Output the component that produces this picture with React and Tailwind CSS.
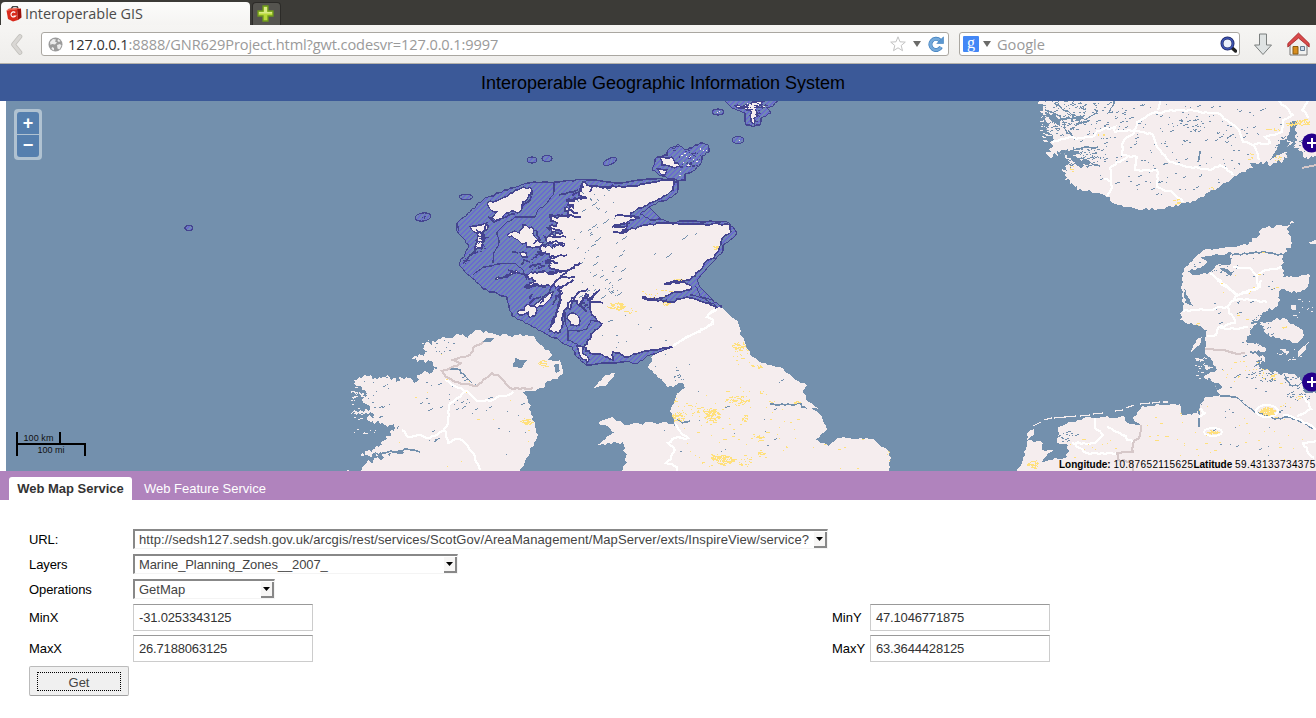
import React from "react";

/* ---------- small deterministic helpers for the map drawing ---------- */
function rng(seed) {
  let s = seed >>> 0;
  return () => {
    s = (s * 1664525 + 1013904223) >>> 0;
    return s / 4294967296;
  };
}

function parse(str) {
  return str.trim().split(/\s+/).map((p) => p.split(",").map(Number));
}

// Subdivides a polyline and moves the new points a little, for a ragged coast.
// amp is a number, or a function of the position.
function jag(str, amp, seed = 7, closed = true) {
  const pts = parse(str);
  const r = rng(seed);
  const out = [];
  const n = closed ? pts.length : pts.length - 1;
  for (let i = 0; i < n; i++) {
    const [x1, y1] = pts[i];
    const [x2, y2] = pts[(i + 1) % pts.length];
    const len = Math.hypot(x2 - x1, y2 - y1);
    const a = typeof amp === "function" ? amp((x1 + x2) / 2, (y1 + y2) / 2) : amp;
    const k = Math.max(1, Math.round(len / (a > 1.7 ? 2 : 3)));
    out.push([x1, y1]);
    for (let j = 1; j < k; j++) {
      const o = (r() - 0.5) * 2 * a;
      out.push([
        x1 + ((x2 - x1) * j) / k - ((y2 - y1) / len) * o,
        y1 + ((y2 - y1) * j) / k + ((x2 - x1) / len) * o,
      ]);
    }
  }
  if (!closed) out.push(pts[pts.length - 1]);
  return "M" + out.map(([x, y]) => Math.round(x) + " " + Math.round(y)).join("L") + (closed ? "Z" : "");
}

// Horizontal specks [cx, cy, rx, ry, count] spread over an ellipse.
function specks(list, maxW, seed, slope = 0) {
  const r = rng(seed);
  let d = "";
  for (const [cx, cy, rx, ry, n] of list) {
    for (let i = 0; i < n; i++) {
      const a = r() * Math.PI * 2;
      const q = Math.sqrt(r());
      const x = Math.round(cx + Math.cos(a) * rx * q);
      const y = Math.round(cy + Math.sin(a) * ry * q);
      const w = 1 + Math.floor(r() * r() * maxW);
      for (let j = 0; j < w; j++) d += `M${x + j} ${y - Math.round(j * slope)}h1v1h-1z`;
    }
  }
  return d;
}

const ZONE =
  "527,183 560,182 583,179 600,181 620,183 643,180 660,178 678,182 678,190 672,197 653,205 649,207 661,219 672,223 682,221 727,222 733,227 737,233 733,238 723,245 723,251 713,262 707,268 697,280 700,287 712,299 722,307 718,310 700,320 673,347 650,355 635,364 627,361 617,363 586,365 577,357 572,347 512,316 507,297 483,289 459,265 469,245 457,231 457,223 485,198";
const SCOT =
  "583,182 587,185 600,187 622,187 650,183 665,180 674,181 673,190 667,195 650,203 631,213 630,216 638,217 628,222 614,227 627,226 622,232 638,227 660,223 682,224 700,224 728,224 731,232 724,237 719,247 717,253 703,267 690,280 681,281 665,284 685,282 692,287 690,290 672,293 663,298 642,298 655,300 672,302 680,299 687,297 703,302 719,308 707,317 712,325 697,333 673,347 648,351 636,354 628,357 613,352 613,360 600,354 590,353 584,347 593,333 602,324 592,315 590,302 586,294 580,306 574,299 570,309 566,308 563,316 560,332 550,331 557,310 560,293 558,286 545,286 525,287 535,281 525,275 531,272 547,273 562,272 549,266 546,261 556,257 539,254 540,247 565,245 548,243 545,237 562,233 547,228 557,223 549,217 570,215 565,208 573,207 566,201 587,198 579,192";
const ENGLAND =
  "722,308 738,322 742,337 752,357 762,363 782,368 795,380 807,385 803,390 808,402 818,409 808,407 820,415 827,429 815,440 828,446 837,438 872,439 890,452 890,467 885,474 620,474 627,463 623,442 596,445 615,432 598,423 612,417 625,425 663,422 675,425 670,412 675,400 677,393 685,388 682,383 667,387 657,375 648,368 655,353 673,346 697,332 713,324 708,317 717,309";
const IRELAND =
  "475,330 497,335 532,336 552,355 547,360 560,360 563,370 558,379 547,381 543,388 532,391 523,392 528,400 533,417 537,438 530,453 522,467 520,474 363,474 367,462 393,454 361,456 382,445 392,430 403,427 380,424 367,420 374,415 350,413 370,409 362,400 368,396 350,392 367,394 353,380 367,376 393,378 397,383 402,378 422,381 417,375 440,369 433,363 412,359 427,352 422,347 440,339 463,334 468,338";
const NORWAY =
  "1037,98 1043,110 1048,127 1053,137 1047,155 1053,156 1063,150 1070,163 1063,172 1065,180 1080,189 1110,197 1112,203 1133,208 1158,209 1190,203 1217,188 1250,168 1253,163 1273,163 1288,158 1287,150 1293,140 1298,150 1307,157 1320,160 1320,98";
const JUTLAND =
  "1295,221 1287,228 1292,243 1283,255 1282,267 1283,277 1310,276 1308,286 1300,292 1280,290 1278,305 1268,310 1262,314 1257,322 1250,333 1247,343 1268,350 1249,352 1267,358 1257,368 1300,377 1305,393 1320,393 1320,474 1013,474 1022,463 1028,440 1043,443 1042,450 1053,450 1040,462 1067,457 1068,445 1057,443 1058,427 1083,418 1125,417 1127,423 1140,425 1132,418 1142,406 1180,404 1182,415 1192,415 1198,410 1205,397 1220,395 1213,383 1203,377 1217,370 1205,352 1207,330 1180,320 1183,307 1182,273 1190,262 1203,250 1223,248 1247,245 1265,228 1285,226";

const ISLES = [
  "487,203 505,197 518,190 530,187 532,194 522,205 520,212 506,213 500,220 490,218 497,212 489,208",
  "470,227 485,223 488,228 482,233 482,248 475,249 477,233",
  "523,225 532,227 535,237 543,243 538,247 530,247 518,240 514,238 507,235 515,231 519,233",
  "495,279 506,275 516,270 518,272 505,277 497,280",
  "517,312 524,310 528,304 537,310 535,316 530,318 528,312 519,315",
  "553,292 548,301 537,308 534,306 544,298",
  "568,315 574,313 580,321 579,325 571,325 567,319",
  "577,346 583,347 582,352 589,360 587,363 579,353",
  "520,253 526,253 527,257 522,257",
  "529,297 533,294 530,299",
  "660,158 672,157 675,163 683,167 672,167 662,165",
  "657,169 667,170 665,175 660,173",
  "735,106 748,106 752,102 765,101 755,108 757,113 754,124 751,122 752,112",
];

const scotAmp = (x) => (x < 590 ? 1.9 : 0.9);

const LAND = [
  jag(SCOT, scotAmp, 3),
  jag(ENGLAND, (x) => (x < 700 ? 1.6 : 1), 5),
  jag(IRELAND, (x) => (x < 450 ? 2.8 : 1.5), 9),
  jag(NORWAY, (x) => (x < 1080 || x > 1250 ? 3 : 1.4), 13),
  jag(JUTLAND, (x) => (x > 1240 && x < 1300 ? 1.8 : 1.3), 17),
  jag("594,388 603,377 615,373 607,385", 0.8, 4),
  jag("1258,323 1283,318 1303,330 1303,338 1298,343 1270,337", 1.4, 6),
  jag("1298,357 1299,350 1310,340 1302,354", 0.6, 6),
  jag("1247,343 1260,344 1268,350 1256,347", 1, 8),
  jag("1278,349 1290,352 1287,354", 0.8, 8),
  jag("1291,305 1296,305 1296,310 1291,309", 0.5, 8),
  jag("1308,243 1318,239 1318,245", 0.5, 8),
  jag("1028,432 1034,429 1034,434 1027,440", 0.6, 2),
  jag("1197,339 1202,337 1200,345 1191,352", 0.8, 5),
  jag("1194,358 1204,358 1202,361 1196,360", 0.8, 6),
  jag("1205,365 1214,368 1206,370", 0.8, 6),
].join("");

const SMALL_ISLES = specks(
  [[364, 431, 12, 3, 7], [358, 400, 7, 20, 22], [429, 347, 10, 12, 16], [1045, 122, 6, 20, 46], [1200, 366, 7, 13, 18], [1290, 352, 14, 8, 12], [1302, 310, 12, 12, 12], [1185, 420, 2, 2, 2], [350, 471, 10, 1, 10]],
  5, 31
);

const LINES = [
  "554,182 553,195 547,203 538,210 535,217 515,217 505,224 497,232 499,243 493,254 493,263",
  "473,275 483,267 500,264 515,263 523,270 527,280",
  "568,341 568,330 580,331 587,329 591,320 598,321",
  "568,330 565,322 565,312",
  "568,340 577,344 582,350",
  "457,223 459,231",
  "695,286 700,296 712,300 722,306",
  "667,294 680,289 692,290",
  "649,207 640,214 650,220 661,219",
  "690,295 705,299 716,306",
].map((l, i) => jag(l, 0.6, i + 2, false)).join("");

const LOCHS = [
  "580,263 568,270 557,280 550,290 540,303", "588,289 577,294 568,303 565,310", "597,292 588,300 592,302 603,303",
  "583,297 581,306 587,312", "547,273 562,271 575,268", "560,278 575,277", "525,274 515,272 508,270",
  "540,247 556,241 565,244", "548,228 560,230", "547,237 566,237", "549,215 565,216 581,217", "566,200 580,198 587,198",
  "568,210 578,213", "553,258 567,255", "547,261 558,263", "615,216 625,216 640,218", "612,227 621,224 630,223",
  "613,232 623,233 628,229", "664,284 676,281 690,280", "642,297 655,300 667,300", "558,290 561,300 557,310 552,325",
  "536,230 540,240 534,244", "524,287 534,284 546,287", "545,266 536,265 529,268", "530,262 524,260 521,265",
  "476,230 485,238 481,242", "487,222 483,232 484,241", "477,248 468,258 463,263", "470,256 478,252",
  "488,217 494,222 506,217 515,214", "522,206 530,200 531,192", "559,195 578,190", "546,252 537,255 533,258",
  "573,280 566,285 559,289", "600,290 594,294 592,300", "563,293 556,296 553,305", "512,252 518,253", "529,305 534,299 541,297",
  "592,187 590,192", "582,183 579,192 572,196", "600,187 610,188 613,185",
].map((l, i) => jag(l, 1.1, i + 40, false)).join("");

const WHITE = [
  "673,346 685,338 697,332 704,329 713,324 713,320 707,317 711,312 717,310",
  "675,424 681,433 688,438 675,438 668,443 675,450 671,459 666,463 677,467 677,472",
  "445,380 455,386 467,391 457,398 450,403 449,415 448,423 443,431 430,438 418,435 408,437 402,430",
  "467,391 477,401 490,401 497,397 506,396 513,392",
  "445,430 448,443 456,439 462,440 473,453 480,470",
  "1052,142 1067,138 1092,137 1097,131 1115,127 1115,132 1135,130 1137,122 1153,113 1183,110 1200,112 1217,113 1237,128 1243,142 1253,145 1260,160",
  "1253,145 1270,143 1265,137 1282,132 1283,120 1293,115 1278,100", "1160,100 1158,110",
  "1135,131 1153,135 1157,147 1170,162 1193,168 1210,170 1220,165 1233,175",
  "1135,131 1123,142 1122,155 1137,157 1135,170 1157,170 1157,187 1173,193 1183,202",
  "1127,157 1110,168 1112,187 1107,196", "1308,100 1302,110 1308,118", "1104,179 1112,181",
  "1210,273 1222,283 1238,295 1227,307 1207,310 1183,311", "1227,307 1235,323 1218,328 1216,335 1207,336", "1220,328 1235,329 1248,327",
  "1217,280 1230,290 1238,295 1260,287 1261,280", "1233,300 1250,300 1267,302", "1238,295 1258,288 1257,276 1250,268 1233,267", "1257,276 1265,270 1283,268",
  "1095,417 1095,428 1103,435 1095,443 1072,443 1087,453 1117,453", "1107,427 1120,433 1133,443",
  "1283,415 1290,416 1307,423 1316,430", "1316,441 1303,443 1307,451 1314,458", "1303,395 1311,409 1297,417", "1199,408 1205,413 1199,417",
].map((l, i) => jag(l, 1, i + 80, false)).join("");

const GREY = [
  "483,342 473,348 470,355 453,360 462,363 452,367 442,371 446,377 455,382 477,386 486,378 492,373 500,377 510,388 520,389 533,388",
  "1205,349 1218,350 1230,352 1237,354 1245,353", "1141,425 1140,436 1133,443 1133,452 1117,453 1118,460 1133,462 1133,472",
].map((l, i) => jag(l, 0.7, i + 120, false)).join("");

const WATER_LINES = [
  "770,404 785,405 798,403 807,409", "373,454 385,453 400,452 404,449 420,452", "450,369 460,370 466,377 472,383",
  "1199,410 1199,427", "1220,396 1238,398 1247,406 1257,413 1275,419 1290,417 1316,430", "1232,255 1250,253 1262,252 1275,254 1284,255",
  "677,420 682,423 690,421", "1200,151 1198,162", "1253,338 1268,340", "1251,323 1260,321 1258,330", "1284,375 1290,385 1298,386 1304,380", "1254,367 1262,360",
  "1062,152 1082,148 1098,147", "1068,157 1085,160 1100,166", "1045,110 1060,116 1066,130 1075,140", "1055,104 1070,113 1085,120 1098,110", "1075,126 1090,120",
  "1060,120 1075,118", "1109,113 1114,100",
].map((l, i) => jag(l, 1.2, i + 150, false)).join("");

const WATER_AREAS = [
  "515,358 520,360 527,360 523,367 513,367", "482,342 487,338 496,337 491,342", "554,365 559,364 560,371 556,373",
  "1213,255 1232,253 1230,265 1216,265 1210,272 1195,275 1186,271 1200,268 1207,262 1200,258", "1184,288 1190,300 1193,306 1185,303",
  "1058,152 1072,150 1080,153 1068,157", "1070,159 1084,160 1090,164 1078,166", "1287,142 1290,122 1297,121 1295,142", "1220,268 1234,271 1230,276",
  "1270,160 1287,152 1290,142 1280,140", "1308,388 1314,388 1312,393", "1254,338 1262,338 1266,348 1252,342",
  "390,453 402,450 404,453", "1207,362 1217,366 1208,367", "1208,378 1222,387 1214,391",
  "1045,112 1056,116 1062,128 1052,122", "1066,113 1078,117 1085,115 1080,122",
].map((l, i) => jag(l, 1.2, i + 190)).join("");

const WATER_SPECKS = specks(
  [[1062, 116, 24, 22, 150], [1082, 157, 24, 11, 130], [1100, 120, 30, 20, 50], [1170, 150, 95, 48, 150], [1230, 120, 60, 18, 30], [1290, 148, 16, 14, 60], [1180, 125, 25, 8, 20],
    [1215, 265, 22, 12, 36], [1260, 330, 12, 16, 60], [1275, 375, 30, 8, 46], [1250, 400, 50, 60, 40], [1066, 437, 10, 5, 16], [1300, 394, 14, 8, 26], [1237, 300, 50, 45, 18],
    [450, 392, 35, 25, 22], [480, 405, 20, 10, 10], [376, 395, 16, 24, 24], [440, 345, 20, 8, 14], [432, 437, 5, 6, 8], [720, 400, 90, 60, 26], [515, 430, 30, 30, 8], [635, 330, 40, 20, 12], [678, 376, 8, 10, 10]],
  5, 211, 0.25
);
const HIGHLAND_SPECKS =
  specks([[596, 255, 30, 52, 38], [604, 290, 18, 8, 14], [640, 240, 60, 40, 10]], 7, 251, 0.7) + specks([[598, 200, 30, 14, 12]], 4, 77, -0.7);

const YELLOW = specks(
  [[740, 346, 9, 4, 46], [742, 356, 9, 11, 16], [755, 366, 7, 2, 16], [762, 392, 3, 2, 6], [737, 400, 13, 5, 56], [711, 415, 8, 7, 95], [678, 417, 7, 5, 46], [690, 410, 14, 9, 24],
    [724, 460, 9, 5, 80], [715, 456, 6, 4, 34], [745, 418, 4, 4, 20], [758, 438, 7, 3, 20], [760, 453, 4, 3, 14], [745, 462, 8, 4, 14], [740, 430, 60, 44, 70], [850, 450, 40, 20, 12], [796, 402, 4, 1, 12],
    [615, 306, 8, 4, 50], [625, 309, 13, 4, 16], [665, 303, 5, 2, 14], [655, 293, 17, 5, 16], [680, 279, 6, 1, 10], [715, 247, 3, 2, 12], [542, 363, 5, 4, 22], [526, 421, 6, 3, 40], [460, 410, 80, 60, 16],
    [1071, 168, 3, 4, 6], [1302, 122, 8, 3, 50], [1290, 124, 5, 2, 20], [1273, 129, 7, 1, 12], [1250, 156, 3, 4, 8], [1175, 201, 3, 4, 10], [1277, 158, 3, 3, 8], [1212, 188, 3, 1, 5], [1100, 134, 3, 2, 4],
    [1267, 411, 7, 4, 100], [1213, 432, 6, 2, 34], [1230, 430, 90, 38, 50], [1260, 370, 38, 16, 36], [1033, 464, 6, 4, 34], [1080, 450, 40, 18, 14], [1284, 327, 3, 1, 8], [1182, 413, 2, 3, 8],
    [1250, 290, 30, 30, 12], [1263, 252, 2, 1, 5], [1197, 324, 2, 1, 5], [675, 398, 2, 5, 10], [889, 455, 1, 8, 8], [525, 421, 4, 2, 16], [1298, 397, 3, 2, 8], [1272, 377, 4, 3, 12]],
  4, 301
);

const ZONE_ISLES = [
  [718, 112, 6, 3, 0], [738, 140, 6, 3.5, 0], [532, 160, 5, 3, 0], [547, 158.5, 5, 3, 0], [610, 161.5, 7, 3, -25],
  [466, 197, 6.5, 2.5, 0], [423, 217, 8, 4, -8], [189, 228, 4, 2.5, 0],
];
const ORKNEY = jag("668,150 678,144 687,150 700,143 708,145 709,152 702,156 701,163 695,170 685,174 685,180 678,181 667,178 652,170 657,157 667,155", 1, 23);
const SHETLAND = jag("722,98 732,108 745,113 746,125 753,127 760,125 761,118 771,113 767,108 784,99", 1, 24);

function MapCanvas() {
  return (
    <svg className="block h-[370px] w-[1310px]" viewBox="6 101 1310 370" shapeRendering="crispEdges" aria-hidden="true">
      <defs>
        <pattern id="hatch" width="5" height="5" patternUnits="userSpaceOnUse">
          <rect width="5" height="5" fill="#7088b4" />
          <path d="M0 4h2v1h-2zM1 3h2v1h-2zM2 2h2v1h-2zM3 1h2v1h-2zM4 0h1v1h-1zM0 0h1v1h-1z" fill="#6a69d0" />
        </pattern>
        <clipPath id="land"><path d={LAND} /></clipPath>
      </defs>
      <rect x="6" y="101" width="1310" height="370" fill="#7390ad" />
      <g fill="#f5edee">
        <path d={LAND} />
        <path d={SMALL_ISLES} />
      </g>
      <path d="M1033 426l8-4M1044 420l8-2M1054 418l22-2M1080 416l10-1M1093 414l10-1M1115 411l8-1M1126 408l8-3M1140 404l10-1M1152 403l8-1M1163 402l5 0" stroke="#f5edee" strokeWidth="1.2" fill="none" />
      <g stroke="#44448f" strokeWidth="1.2" fill="url(#hatch)">
        <path d={jag(ZONE, 0.7, 21)} />
        <path d={ORKNEY} />
        <path d={SHETLAND} />
        {ZONE_ISLES.map(([x, y, rx, ry, a], i) => (
          <ellipse key={i} cx={x} cy={y} rx={rx} ry={ry} transform={`rotate(${a} ${x} ${y})`} />
        ))}
      </g>
      <path d={LINES} fill="none" stroke="#44448f" strokeWidth="1.2" />
      <path d={jag(SCOT, scotAmp, 3)} fill="#f5edee" stroke="#44448f" strokeWidth="1.4" />
      <path d="M723 310L719 307L704 316L709 324L696 331L672 345L673 348L655 354L650 366L665 380L700 380L745 350L741 338L737 322Z" fill="#f5edee" />
      <g fill="#f5edee" stroke="#44448f" strokeWidth="1.3">
        {ISLES.map((s, i) => <path key={i} d={jag(s, 1.5, i + 60)} />)}
      </g>
      <path d={LOCHS} fill="none" stroke="#44448f" strokeWidth="1.7" />
      <path d={specks([[480, 240, 6, 12, 22], [466, 261, 4, 4, 8], [689, 158, 12, 9, 42], [675, 148, 4, 3, 8], [755, 106, 14, 5, 40], [757, 117, 4, 6, 10], [540, 262, 12, 10, 20], [423, 217, 3, 1, 5], [586, 303, 6, 8, 18]], 4, 401)} fill="#44448f" />
      <path d={specks([[690, 158, 11, 8, 16], [678, 173, 3, 3, 4], [703, 148, 4, 3, 4], [755, 106, 12, 4, 10], [738, 140, 1, 1, 1], [718, 112, 1, 1, 2]], 3, 411)} fill="#f5edee" />
      <g clipPath="url(#land)">
        <path d={WATER_AREAS} fill="#7390ad" />
        <path d={WATER_SPECKS} fill="#7390ad" />
        <path d={HIGHLAND_SPECKS} fill="#7390ad" />
        <path d={WATER_LINES} fill="none" stroke="#7390ad" strokeWidth="1.3" />
        <path d={WHITE} fill="none" stroke="#fff" strokeWidth="2.2" />
        <path d={GREY} fill="none" stroke="#d6c8c9" strokeWidth="2.2" />
        <ellipse cx="1267" cy="411" rx="11" ry="6" fill="none" stroke="#fff" strokeWidth="2" />
        <ellipse cx="1213" cy="432" rx="9" ry="4" fill="none" stroke="#fff" strokeWidth="2" />
        <path d={YELLOW} fill="#ffe07c" />
      </g>
      <path d="M673 346L685 338L697 332L704 329L711 324L713 320L707 317L710 313L717 310" fill="none" stroke="#fff" strokeWidth="2.2" />
      <path d="M1302 168L1316 165" stroke="#d6c8c9" strokeWidth="2" />
      <g shapeRendering="auto">
        {[143, 382].map((y) => (
          <g key={y}>
            <circle cx="1311.5" cy={y} r="9.5" fill="#25008b" />
            <path d={`M1307 ${y}h10M1312 ${y - 5}v10`} stroke="#fff" strokeWidth="2" />
          </g>
        ))}
      </g>
    </svg>
  );
}

/* ---------- browser chrome ---------- */
const Gift = () => (
  <svg className="h-4 w-4 shrink-0" viewBox="0 0 16 16">
    <path d="M5 3l2-2.500h4l1 2" fill="none" stroke="#444" strokeWidth="1.6" />
    <path d="M.5 4.500L11 3l1 11-5 1.500L2 13z" fill="#d92a1c" />
    <path d="M11 3l4-.500.500 9L12 14z" fill="#9d120c" />
    <path d="M.5 4.500L3 2.500l11-.500-3 1.500z" fill="#ee5a45" />
    <path d="M9.300 6.500a2.600 2.600 0 1 0 .4 3.500H7.500" fill="none" stroke="#fff" strokeWidth="1.100" />
  </svg>
);

const Globe = () => (
  <svg className="h-[15px] w-[15px] shrink-0" viewBox="0 0 15 15">
    <circle cx="7.500" cy="7.500" r="7" fill="#9b9b9b" />
    <path d="M2 5l3-3 3 .500-1 2 2 1-2 2-3-.500-1.500 1zM9 8l3-1 1.500 1.500-2 4-2-1zM10 2l2.500 2-1.500 1-1.500-1zM4 10l2 1v2.500L3.500 12z" fill="#ececec" />
  </svg>
);

const Caret = () => (
  <svg className="h-[6px] w-[8px] shrink-0" viewBox="0 0 8 6"><path d="M0 0h8L4 6z" fill="#6b6b69" /></svg>
);

function Chrome() {
  return (
    <header className="w-[1316px] font-['Open_Sans',sans-serif]">
      <div className="flex h-[25px] items-end gap-[2px] bg-[#3c3b37] pl-px">
        <div className="flex h-[23px] w-[249px] items-center gap-[3px] rounded-t-[4px] bg-linear-to-b from-[#fcfcfb] to-[#f5f4f2] pl-[5px]">
          <Gift />
          <span className="pt-px text-[14.4px] leading-none text-[#4b4b4b]">Interoperable GIS</span>
        </div>
        <div className="flex h-[23px] w-[29px] items-center justify-center rounded-t-[4px] border border-b-0 border-[#2c2b28] bg-[#55544f] pr-[2px] pb-[2px]">
          <svg className="h-[17px] w-[17px]" viewBox="0 0 17 17">
            <path d="M6 1h5v5h5v5h-5v5H6v-5H1V6h5z" fill="#b7d83a" stroke="#6f9a1c" strokeWidth="1.300" />
            <path d="M7 2h3v5h5v1.500H2V7h5z" fill="#d9ec84" />
          </svg>
        </div>
      </div>
      <div className="flex h-[39px] items-center border-b border-[#b5b2ab] bg-linear-to-b from-[#f6f5f3] to-[#efeeec]">
        <svg className="ml-[10px] h-[21px] w-[13px]" viewBox="0 0 13 21">
          <path d="M10 2.500L3.500 10.500l6.500 8" fill="none" stroke="#c2c0bc" strokeWidth="4.600" strokeLinecap="round" strokeLinejoin="round" />
          <path d="M10 2.500L3.500 10.500l6.500 8" fill="none" stroke="#d9d7d4" strokeWidth="3" strokeLinecap="round" strokeLinejoin="round" />
        </svg>
        <div className="ml-[18px] flex h-6 w-[908px] items-center rounded-[3px] border border-[#aaa7a1] bg-white pl-[6px]">
          <Globe />
          <span className="ml-[5px] whitespace-nowrap text-[14.6px] leading-none tracking-[-0.12px] text-[#9a9a9a]">
            <span className="text-[#333]">127.0.0.1</span>:8888/GNR629Project.html?gwt.codesvr=127.0.0.1:9997
          </span>
          <div className="ml-auto flex items-center gap-[7px] pr-1">
            <svg className="h-4 w-4" viewBox="0 0 16 16">
              <path d="M8 .800l2 5 5.300.300-4.100 3.400 1.300 5.200L8 11.800l-4.500 2.900 1.300-5.200L.7 6.100 6 5.800z" fill="#fff" stroke="#c3c3c3" />
            </svg>
            <Caret />
            <svg className="h-4 w-4" viewBox="0 0 16 16">
              <path d="M12 4.500A5.600 5.600 0 1 0 13 11" fill="none" stroke="#3f7fbe" strokeWidth="4" />
              <path d="M12 4.500A5.600 5.600 0 1 0 13 11" fill="none" stroke="#74a9da" strokeWidth="2.600" />
              <path d="M15.500.800v6.700H8.800z" fill="#5b97d0" stroke="#3f7fbe" strokeWidth=".6" />
            </svg>
          </div>
        </div>
        <div className="ml-[10px] flex h-6 w-[281px] items-center rounded-[3px] border border-[#aaa7a1] bg-white pr-[2px] pl-[3px]">
          <div className="flex h-4 w-4 items-center justify-center rounded-[1px] bg-[#4387f6] pb-[3px] font-['Liberation_Serif',serif] text-[16px] leading-none text-white">g</div>
          <div className="ml-1"><Caret /></div>
          <span className="ml-[6px] text-[14.6px] leading-none text-[#9a9a9a]">Google</span>
          <svg className="ml-auto h-[17px] w-[17px]" viewBox="0 0 17 17">
            <path d="M11 11l4.500 4" stroke="#222" strokeWidth="3.400" strokeLinecap="round" />
            <circle cx="7.500" cy="7.500" r="5.500" fill="#eaf0fb" stroke="#1c2463" strokeWidth="3" />
            <circle cx="7.500" cy="7.500" r="5.500" fill="none" stroke="#3e56b4" strokeWidth="1.500" />
          </svg>
        </div>
        <svg className="ml-[14px] h-[23px] w-[18px]" viewBox="0 0 18 23">
          <path d="M5.500 1h7v11h5L9 21.500.500 12h5z" fill="#dfe3e3" stroke="#7b7f7e" />
        </svg>
        <svg className="ml-[15px] h-[24px] w-[23px]" viewBox="0 0 23 24">
          <path d="M3 11v12h17V11l-8.500-7z" fill="#f1f1ef" stroke="#777" />
          <path d="M11.500 1L.8 11.500v3.500l10.700-9 10.700 9v-3.500z" fill="#d9494a" stroke="#9f2022" strokeWidth=".8" />
          <path d="M6 14.500h5V22H6z" fill="#d78d1e" stroke="#8b5a0e" />
          <path d="M13.500 14.500h4v4h-4z" fill="#cfdcea" stroke="#667b91" />
        </svg>
      </div>
    </header>
  );
}

/* ---------- form ---------- */
const Select = ({ children, className }) => (
  <div className={"flex h-[20px] items-center justify-between border-t-2 border-l-2 border-t-[#888] border-l-[#888] border-r border-r-[#f4f4f4] border-b border-b-[#f4f4f4] bg-white pl-1 text-[#444] " + className}>
    <span className="whitespace-nowrap">{children}</span>
    <span className="flex h-4 w-[13px] items-center justify-center border-r-2 border-b-2 border-[#888] bg-[#f7f6f5]">
      <svg className="h-1 w-[7px]" viewBox="0 0 7 4"><path d="M0 0h7L3.500 4z" fill="#000" /></svg>
    </span>
  </div>
);

const Field = ({ children }) => (
  <div className="flex h-[27px] w-[180px] items-center border border-[#ccc] border-t-[#999] px-[5px] tracking-[-0.17px] text-[#333]">{children}</div>
);

const Label = ({ children }) => <div className="w-[104px] shrink-0 tracking-[-0.08px]">{children}</div>;

export default function App() {
  return (
    <div className="h-[718px] w-[1316px] overflow-hidden bg-white font-['Liberation_Sans',Arial,sans-serif] text-[13px] leading-[15px] text-black">
      <Chrome />
      <h1 className="flex h-[37px] items-center justify-center bg-[#3b5998] pl-[10px] text-[18px] leading-none">
        Interoperable Geographic Information System
      </h1>
      <section className="relative ml-[6px] h-[370px] overflow-hidden">
        <MapCanvas />
        <div className="absolute top-[8px] left-[8px] flex w-[28px] flex-col gap-px rounded-[4px] bg-[#b0c2d1] p-[3px] text-white">
          <button className="flex h-[22px] items-center justify-center rounded-t-[3px] bg-[#557fae] text-[18px] leading-none font-bold">+</button>
          <button className="flex h-[22px] items-center justify-center rounded-b-[3px] bg-[#557fae] pb-[2px] text-[18px] leading-none font-bold">−</button>
        </div>
        <div className="absolute top-[331px] left-[10px] text-[9px] leading-[10px] text-[#111]">
          <div className="h-[11px] w-[45px] border-x-2 border-black pt-px text-center tracking-[0.1px]">100 km</div>
          <div className="h-[13px] w-[70px] border-x-2 border-t-2 border-black text-center">100 mi</div>
        </div>
        <div className="absolute top-[357px] left-[1053px] text-[10px] leading-[13px] whitespace-nowrap">
          <b>Longitude:</b> <span className="tracking-[0.4px]">10.87652115625</span><b>Latitude</b> <span className="tracking-[0.4px]">59.43133734375</span>
        </div>
      </section>
      <nav className="flex h-[29px] items-end bg-[#b083bd] pl-[9px]">
        <div className="flex h-[23px] w-[123px] items-center justify-center rounded-t-[3px] bg-white font-bold text-[#333]">Web Map Service</div>
        <div className="flex h-[23px] items-center pl-3 text-white">Web Feature Service</div>
      </nav>
      <main className="flex flex-col pt-[29px] pl-[29px]">
        <div className="mb-[5px] flex items-center"><Label>URL:</Label>
          <Select className="w-[695px] tracking-[0.087px]">http://sedsh127.sedsh.gov.uk/arcgis/rest/services/ScotGov/AreaManagement/MapServer/exts/InspireView/service?</Select>
        </div>
        <div className="mb-[5px] flex items-center"><Label>Layers</Label><Select className="w-[325px] tracking-[-0.1px]">Marine_Planning_Zones__2007_</Select></div>
        <div className="mb-[5px] flex items-center"><Label>Operations</Label><Select className="w-[142px]">GetMap</Select></div>
        <div className="mb-1 flex items-center">
          <Label>MinX</Label><Field>-31.0253343125</Field>
          <div className="ml-[519px] w-[38px]">MinY</div><Field>47.1046771875</Field>
        </div>
        <div className="mb-1 flex items-center">
          <Label>MaxX</Label><Field>26.7188063125</Field>
          <div className="ml-[519px] w-[38px]">MaxY</div><Field>63.3644428125</Field>
        </div>
        <button className="flex h-[30px] w-[100px] items-center justify-center rounded-[2px] border border-[#bbb] border-b-[#a0a0a0] bg-[#f0f0f0] text-[#444]">
          <span className="flex h-[19px] w-[84px] items-center justify-center border border-dotted border-black pt-[3px]">Get</span>
        </button>
      </main>
    </div>
  );
}
